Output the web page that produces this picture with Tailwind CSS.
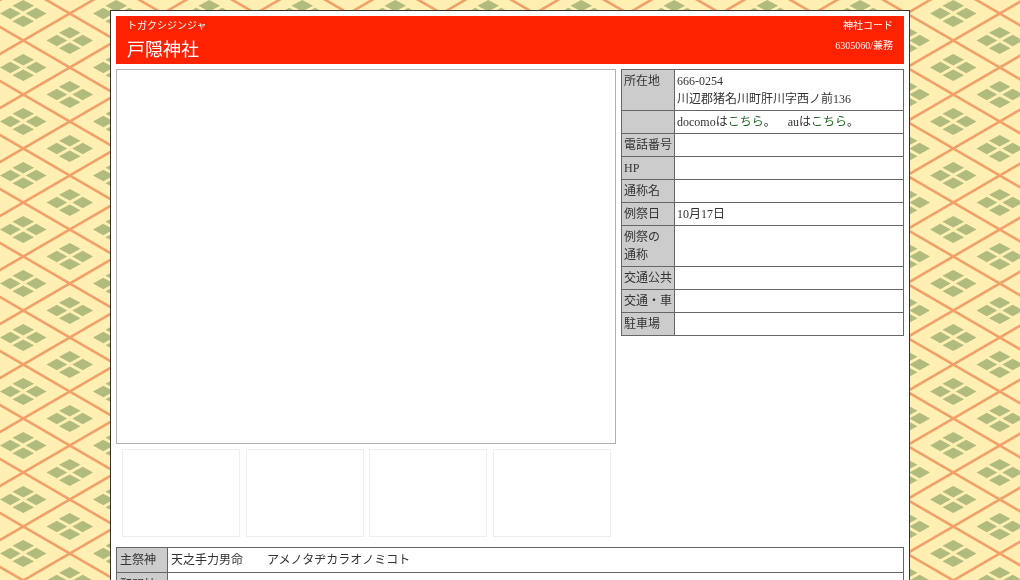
<!DOCTYPE html>
<html lang="ja">
<head>
<meta charset="utf-8">
<meta name="viewport" content="width=device-width, initial-scale=1">
<title>戸隠神社</title>
<script src="https://cdn.jsdelivr.net/npm/@tailwindcss/browser@4"></script>
</head>
<body class="relative min-h-screen bg-[#ffefb3] py-[10px] font-['Liberation_Serif','Noto_Sans_CJK_JP',serif] text-xs leading-[18px] text-[#333333]">
<svg class="absolute inset-0 -z-10 h-full w-full" aria-hidden="true">
  <defs>
    <pattern id="hishi" width="93" height="54" patternUnits="userSpaceOnUse">
      <rect width="93" height="54" fill="#ffefb3"/>
      <path d="M-23.25 13.5L69.75 67.5M-23.25 67.5L116.25 -13.5M23.25 -13.5L116.25 40.5M-23.25 13.5L23.25 -13.5M69.75 67.5L116.25 40.5" stroke="#f2a069" stroke-width="2.6" fill="none"/>
      <g id="flower" fill="#b0bb7d">
        <path d="M23.25 0L34 5.7L23.25 11.5L12.5 5.7ZM23.25 15.5L34 21.3L23.25 27L12.5 21.3ZM0 13.5L10.3 7.7L20.7 13.5L10.3 19.3ZM25.8 13.5L36.2 7.7L46.5 13.5L36.2 19.3Z"/>
      </g>
      <use href="#flower" x="46.5" y="27"/>
    </pattern>
  </defs>
  <rect width="100%" height="100%" fill="url(#hishi)"/>
</svg>
<main class="mx-auto max-w-[800px] border border-[#333333] bg-white p-[5px] will-change-transform">
  <header class="flex justify-between bg-[#ff2200] px-[11px] py-px text-[10px] text-white">
    <div>
      <p>トガクシジンジャ</p>
      <h1 class="pt-0.5 text-lg leading-[26px] font-normal">戸隠神社</h1>
    </div>
    <div class="text-right">
      <p>神社コード</p>
      <p class="pt-0.5">6305060/兼務</p>
    </div>
  </header>

  <div class="mt-[5px] flex items-start gap-[5px]">
    <section class="w-[500px] shrink-0">
      <div class="aspect-[4/3] border border-[#b3b3b3]"></div>
      <div class="mt-[5px] flex justify-between pr-[5px] pl-[6px]">
        <div class="h-[88px] w-[118px] border border-[#eeeeee]"></div>
        <div class="h-[88px] w-[118px] border border-[#eeeeee]"></div>
        <div class="h-[88px] w-[118px] border border-[#eeeeee]"></div>
        <div class="h-[88px] w-[118px] border border-[#eeeeee]"></div>
      </div>
    </section>

    <table class="min-w-0 flex-1 border-collapse text-left [&_td]:border [&_td]:border-[#666666] [&_td]:p-0.5 [&_td]:align-top [&_th]:border [&_th]:border-[#666666] [&_th]:bg-[#cccccc] [&_th]:p-0.5 [&_th]:align-top [&_th]:font-normal [&_th]:whitespace-nowrap">
      <tbody class="[&_tr]:h-[23px]">
        <tr><th scope="row">所在地</th><td class="w-full">666-0254<br>川辺郡猪名川町肝川字西ノ前136</td></tr>
        <tr><th scope="row"></th><td>docomoは<a href="#" class="text-[#226622]">こちら</a>。 &nbsp; &nbsp;auは<a href="#" class="text-[#226622]">こちら</a>。</td></tr>
        <tr><th scope="row">電話番号</th><td></td></tr>
        <tr><th scope="row">HP</th><td></td></tr>
        <tr><th scope="row">通称名</th><td></td></tr>
        <tr><th scope="row">例祭日</th><td>10月17日</td></tr>
        <tr><th scope="row">例祭の<br>通称</th><td></td></tr>
        <tr><th scope="row">交通公共</th><td></td></tr>
        <tr><th scope="row">交通・車</th><td></td></tr>
        <tr><th scope="row">駐車場</th><td></td></tr>
      </tbody>
    </table>
  </div>

  <table class="mt-[10px] w-full border-collapse text-left [&_td]:border [&_td]:border-[#666666] [&_td]:p-[3px] [&_th]:w-[51px] [&_th]:border [&_th]:border-[#666666] [&_th]:bg-[#cccccc] [&_th]:p-[3px] [&_th]:font-normal [&_th]:whitespace-nowrap">
    <tbody>
      <tr><th scope="row">主祭神</th><td>天之手力男命　　アメノタヂカラオノミコト</td></tr>
      <tr><th scope="row">配祀神</th><td></td></tr>
    </tbody>
  </table>
</main>
</body>
</html>
